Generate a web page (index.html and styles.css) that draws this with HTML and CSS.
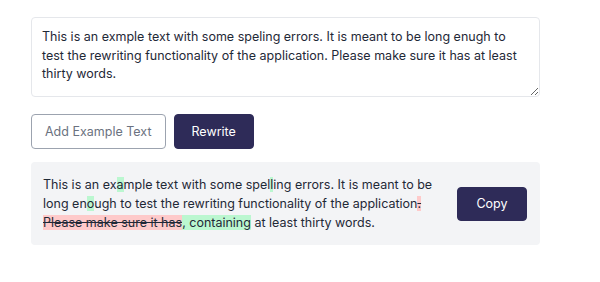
FILE: index.html
```html
<!DOCTYPE html>
<html lang="en">

<head>
    <meta charset="UTF-8">
    <meta name="viewport" content="width=device-width, initial-scale=1.0">
    <title>Text Rewriter</title>
    <link rel="stylesheet" href="styles.css">
</head>

<body>

    <div class="app">
        <textarea id="inputText" class="input-text">This is an exmple text with some speling errors. It is meant to be long enugh to test the rewriting functionality of the application. Please make sure it has at least thirty words.</textarea>

        <div class="actions">
            <button id="addExample" class="btn btn-outline">Add Example Text</button>
            <button id="rewrite" class="btn btn-primary">Rewrite</button>
        </div>

        <div class="result">
            <p id="resultText" class="result-text">This is an ex<span class="add">a</span>mple text with some spel<span class="add">l</span>ing errors. It is meant to be long en<span class="add">o</span>ugh to test the rewriting functionality of the application<span class="del">.</span> <span class="del">Please make sure it has</span><span class="add">, containing</span> at least thirty words.</p>
            <button id="copy" class="btn btn-primary btn-copy">Copy</button>
        </div>
    </div>

</body>

</html>
```

FILE: styles.css
```css
body {
    margin: 0;
    padding: 17px 0 0 31px;
    background: #ffffff;
    font-family: Inter, "Noto Sans", sans-serif;
    color: #1f2937;
}

.app {
    width: 509px;
}

.input-text {
    display: block;
    box-sizing: border-box;
    width: 100%;
    height: 80px;
    padding: 10px 10px;
    border: 1px solid #e5e7eb;
    border-radius: 4px;
    font-family: inherit;
    font-size: 12.5px;
    line-height: 18.5px;
    color: #1f2937;
    resize: vertical;
}

.actions {
    display: flex;
    gap: 8px;
    margin-top: 17px;
}

.btn {
    box-sizing: border-box;
    height: 35px;
    padding: 0 13px;
    border-radius: 4px;
    font-family: inherit;
    font-size: 12.5px;
    cursor: pointer;
}

.btn-outline {
    background: #ffffff;
    border: 1px solid #9ca3af;
    color: #6b7280;
}

.btn-primary {
    background: #2e2b58;
    border: 1px solid #2e2b58;
    color: #ffffff;
    padding: 0 17px;
}

.result {
    display: flex;
    align-items: center;
    gap: 12px;
    margin-top: 13px;
    padding: 13px 13px 13px 12px;
    background: #f3f4f6;
    border-radius: 4px;
}

.result-text {
    flex: 1;
    margin: 0;
    font-size: 12.5px;
    line-height: 19px;
    color: #1f2937;
}

.add {
    background: #bbf7d0;
}

.del {
    background: #fecaca;
    text-decoration: line-through;
}

.btn-copy {
    flex-shrink: 0;
    width: 70px;
    height: 34px;
    padding: 0;
}
```
